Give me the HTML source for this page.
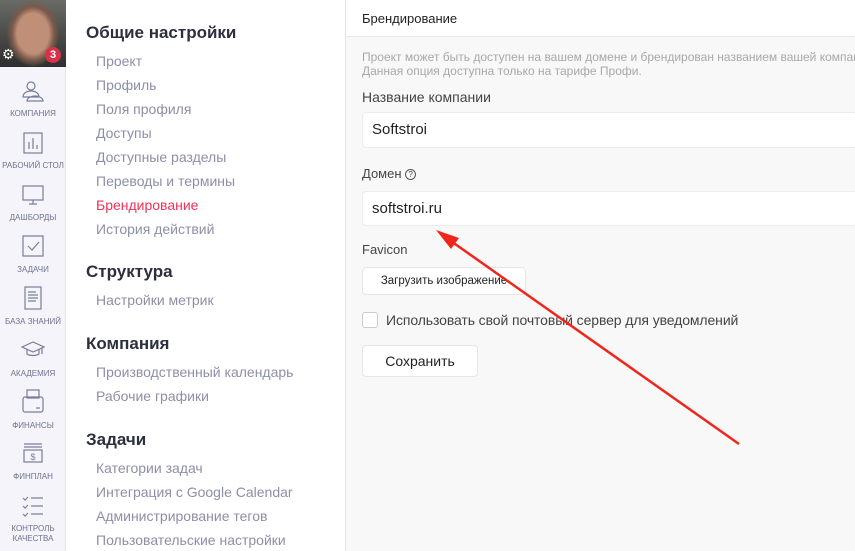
<!DOCTYPE html>
<html><head><meta charset="utf-8"><style>
*{margin:0;padding:0;box-sizing:border-box}
body{width:855px;height:551px;overflow:hidden;font-family:"Liberation Sans","Noto Sans CJK SC",sans-serif;background:#fff;position:relative}
.sb{position:absolute;left:0;top:0;width:66px;height:551px;background:#f4f4fa;border-right:1px solid #e6e6ef}
.av{position:absolute;left:0;top:0;width:66px;height:67px;background:radial-gradient(ellipse 40% 50% at 50% 50%,#c08f78 0 60%,#7a5a4a 80%,transparent 100%),linear-gradient(#6a6a66,#2e2e2e);}
.badge{position:absolute;left:45px;top:47px;width:16px;height:16px;border-radius:50%;background:#d8324a;color:#fff;font-size:11px;font-weight:bold;text-align:center;line-height:16px}
.gear{position:absolute;left:2px;top:46px;color:#fff;font-size:14px}
.it{position:absolute;left:0;width:66px;text-align:center;font-size:8px;color:#6f7290;line-height:10px}
.ic{position:absolute;left:21px;width:24px;height:24px}
.menu{position:absolute;left:86px;top:0}
.h{position:absolute;left:0;font-size:17px;font-weight:bold;color:#2d2f3e;white-space:nowrap}
.m{position:absolute;left:10px;font-size:14px;color:#8c8fa8;white-space:nowrap}
.rp{position:absolute;left:345px;top:0;width:510px;height:551px;background:#f8f8f8;border-left:1px solid #e6e6e6}
.hd{height:37px;background:#fff;border-bottom:1px solid #e8e8e8;font-size:13px;color:#222;padding:11px 0 0 16px}
.t{position:absolute;left:16px;white-space:nowrap}
.inp{position:absolute;left:16px;width:520px;background:#fff;border:1px solid #ececec;border-radius:4px;font-size:15px;color:#222;padding-left:9px}
.btn{position:absolute;left:16px;background:#fff;border:1px solid #e6e6e6;border-radius:4px;text-align:center;color:#222}
</style></head><body>
<div class="sb">
<div class="av"><span class="gear">⚙</span><div class="badge">3</div></div>
<svg class="ic" style="top:80px" viewBox="0 0 24 24" fill="none" stroke="#7a7d9a" stroke-width="1.2"><circle cx="10" cy="6" r="4"/><path d="M2 17c0-4 4-6 8-6s8 2 8 6H2zM6 21c0-3 4-5 8-5s8 2 8 5H6z"/></svg>
<div class="it" style="top:109px">КОМПАНИЯ</div>
<svg class="ic" style="top:131px" viewBox="0 0 24 24" fill="none" stroke="#7a7d9a" stroke-width="1.2"><rect x="3" y="2" width="18" height="20"/><path d="M8 18v-7M12 18V7M16 18v-4"/></svg>
<div class="it" style="top:161px;left:-3px;width:72px">РАБОЧИЙ СТОЛ</div>
<svg class="ic" style="top:183px" viewBox="0 0 24 24" fill="none" stroke="#7a7d9a" stroke-width="1.2"><rect x="2" y="3" width="20" height="14"/><path d="M12 17v4M8 21h8"/></svg>
<div class="it" style="top:213px">ДАШБОРДЫ</div>
<svg class="ic" style="top:234px" viewBox="0 0 24 24" fill="none" stroke="#7a7d9a" stroke-width="1.2"><rect x="2" y="2" width="20" height="20"/><path d="M7 12l4 4 7-8"/></svg>
<div class="it" style="top:265px">ЗАДАЧИ</div>
<svg class="ic" style="top:286px" viewBox="0 0 24 24" fill="none" stroke="#7a7d9a" stroke-width="1.2"><rect x="4" y="1" width="16" height="22"/><path d="M7 6h8M7 9h10M7 12h10M7 15h8"/></svg>
<div class="it" style="top:317px">БАЗА ЗНАНИЙ</div>
<svg class="ic" style="top:338px" viewBox="0 0 24 24" fill="none" stroke="#7a7d9a" stroke-width="1.2"><path d="M1 9l11-5 11 5-11 5zM6 11v5c3 2 9 2 12 0v-5M21 10v6"/></svg>
<div class="it" style="top:369px">АКАДЕМИЯ</div>
<svg class="ic" style="top:389px" viewBox="0 0 24 24" fill="none" stroke="#7a7d9a" stroke-width="1.2"><rect x="6" y="1" width="12" height="8"/><rect x="2" y="8" width="20" height="15" rx="2"/><path d="M15 19h4"/></svg>
<div class="it" style="top:421px">ФИНАНСЫ</div>
<svg class="ic" style="top:442px" viewBox="0 0 24 24" fill="none" stroke="#7a7d9a" stroke-width="1.2"><path d="M3 2h18M3 5h18"/><rect x="3" y="8" width="18" height="12"/><text x="12" y="18" font-size="9" text-anchor="middle" fill="#7a7d9a" stroke="none">$</text></svg>
<div class="it" style="top:472px">ФИНПЛАН</div>
<svg class="ic" style="top:494px" viewBox="0 0 24 24" fill="none" stroke="#7a7d9a" stroke-width="1.2"><path d="M2 4l2 2 3-3M10 4h12M2 12l2 2 3-3M10 12h12M2 20l2 2 3-3M10 20h12"/></svg>
<div class="it" style="top:524px">КОНТРОЛЬ<br>КАЧЕСТВА</div>
</div>
<div class="menu">
<div class="h" style="top:23px">Общие настройки</div>
<div class="m" style="top:53px">Проект</div>
<div class="m" style="top:77px">Профиль</div>
<div class="m" style="top:101px">Поля профиля</div>
<div class="m" style="top:125px">Доступы</div>
<div class="m" style="top:149px">Доступные разделы</div>
<div class="m" style="top:173px">Переводы и термины</div>
<div class="m" style="top:197px;color:#f0325a">Брендирование</div>
<div class="m" style="top:221px">История действий</div>
<div class="h" style="top:262px">Структура</div>
<div class="m" style="top:292px">Настройки метрик</div>
<div class="h" style="top:334px">Компания</div>
<div class="m" style="top:364px">Производственный календарь</div>
<div class="m" style="top:388px">Рабочие графики</div>
<div class="h" style="top:430px">Задачи</div>
<div class="m" style="top:460px">Категории задач</div>
<div class="m" style="top:484px">Интеграция с Google Calendar</div>
<div class="m" style="top:508px">Администрирование тегов</div>
<div class="m" style="top:532px">Пользовательские настройки</div>
</div>
<div class="rp">
<div class="hd">Брендирование</div>
<div class="t" style="top:50px;font-size:12px;color:#a8a8a8;line-height:14px">Проект может быть доступен на вашем домене и брендирован названием вашей компании<br>Данная опция доступна только на тарифе Профи.</div>
<div class="t" style="top:89px;font-size:14px;color:#444">Название компании</div>
<div class="inp" style="top:112px;height:36px;line-height:34px">Softstroi</div>
<div class="t" style="top:166px;font-size:13px;color:#444">Домен <span style="display:inline-block;width:11px;height:11px;border:1px solid #555;border-radius:50%;font-size:8px;line-height:9px;text-align:center;vertical-align:1px">?</span></div>
<div class="inp" style="top:191px;height:35px;line-height:33px">softstroi.ru</div>
<div class="t" style="top:242px;font-size:13px;color:#444">Favicon</div>
<div class="btn" style="top:267px;width:164px;height:28px;line-height:26px;font-size:11.5px">Загрузить изображение</div>
<div style="position:absolute;left:16px;top:312px;width:16px;height:16px;border:1px solid #ccc;border-radius:3px;background:#fff"></div>
<div class="t" style="left:40px;top:312px;font-size:14px;color:#444;letter-spacing:-0.1px">Использовать свой почтовый сервер для уведомлений</div>
<div class="btn" style="top:345px;width:116px;height:32px;line-height:30px;font-size:14px">Сохранить</div>
</div>
<svg style="position:absolute;left:0;top:0" width="855" height="551"><line x1="739" y1="444" x2="448" y2="239" stroke="#f0261c" stroke-width="2.5"/><path d="M436 230L459 238L451 249Z" fill="#f0261c"/></svg>
</body></html>
